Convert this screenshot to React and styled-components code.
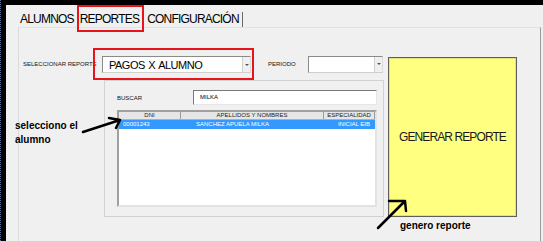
import React from "react";
import styled, { createGlobalStyle } from "styled-components";

const GlobalStyle = createGlobalStyle`
  html, body {
    margin: 0;
    padding: 0;
    background: #000;
  }
  body {
    font-family: "Liberation Sans", Arial, sans-serif;
  }
`;

const Screen = styled.div`
  position: relative;
  width: 543px;
  height: 241px;
  box-sizing: border-box;
  padding: 5px 0 0 5px;
  background: #000;
  border-left: 1px dotted #5a6e9a;
  overflow: hidden;
`;

const Window = styled.div`
  height: 236px;
  background: #f0f0f0;
  display: flex;
  flex-direction: column;
`;

const TabStrip = styled.div`
  height: 22px;
  flex: none;
  display: flex;
  align-items: flex-start;
  gap: 1px;
  padding-left: 12px;
`;

const Tab = styled.div`
  position: relative;
  z-index: 1;
  box-sizing: border-box;
  height: ${(p) => (p.$marked ? "27px" : "22px")};
  padding: ${(p) => (p.$marked ? "5px 3px 0 1px" : "7px 2px 0 2px")};
  border: ${(p) => (p.$marked ? "2px solid #e8141c" : "none")};
  font-size: 12px;
  line-height: 15px;
  letter-spacing: -0.8px;
  color: #000;
  white-space: nowrap;
`;

const TabDivider = styled.div`
  align-self: flex-end;
  width: 1px;
  height: 15px;
  background: #6a6a6a;
`;

const TabPage = styled.div`
  flex: 1;
  margin: 0 2px 0 12px;
  border-top: 1px solid #e2e2e2;
  border-left: 1px solid #dadada;
  border-right: 1px solid #9a9a9a;
  display: flex;
  padding-top: 20px;
`;

const LeftCol = styled.div`
  width: 365px;
  display: flex;
  flex-direction: column;
`;

const TopRow = styled.div`
  height: 32px;
  display: flex;
  align-items: center;
`;

const Label = styled.div`
  box-sizing: border-box;
  width: ${(p) => p.$w}px;
  margin-left: ${(p) => p.$ml || 0}px;
  padding-left: ${(p) => p.$pl || 0}px;
  font-size: 6px;
  color: #111;
  white-space: nowrap;
`;

const MarkBox = styled.div`
  box-sizing: border-box;
  width: 161px;
  height: 32px;
  border: 2px solid #e8141c;
  padding: 6px 0 0 7px;
`;

const Combo = styled.div`
  box-sizing: border-box;
  width: ${(p) => p.$w}px;
  height: 17px;
  background: #fff;
  border: 1px solid;
  border-color: #8a8a8a #dcdcdc #cfcfcf #8a8a8a;
  display: flex;
  align-items: center;
`;

const ComboText = styled.div`
  flex: 1;
  padding-left: 6px;
  font-size: 11px;
  letter-spacing: -0.5px;
  word-spacing: 1px;
  color: #000;
  white-space: nowrap;
`;

const ComboArrow = styled.div`
  align-self: stretch;
  width: 7px;
  background: #f0f0f0;
  border-left: 1px solid #d0d0d0;
  display: flex;
  align-items: center;
  justify-content: center;
  &::after {
    content: "";
    border-left: 2px solid transparent;
    border-right: 2px solid transparent;
    border-top: 2px solid #555;
  }
`;

const Panel = styled.div`
  box-sizing: border-box;
  width: 280px;
  height: 137px;
  margin-left: 85px;
  border: 1px solid #d2d2d2;
  padding: 9px 0 0 12px;
`;

const SearchRow = styled.div`
  height: 15px;
  display: flex;
  align-items: center;
`;

const TextBox = styled.div`
  box-sizing: border-box;
  width: 184px;
  height: 15px;
  background: #fff;
  border: 1px solid;
  border-color: #7a7a7a #e6e6e6 #e6e6e6 #7a7a7a;
  padding-left: 6px;
  font-size: 6px;
  line-height: 13px;
  color: #000;
`;

const Grid = styled.div`
  box-sizing: border-box;
  width: 260px;
  height: 97px;
  margin-top: 5px;
  background: #fff;
  border: 2px solid;
  border-color: #a0a0a0 #e3e3e3 #e3e3e3 #a0a0a0;
`;

const GridRow = styled.div`
  display: flex;
  height: ${(p) => (p.$head ? 7 : 9)}px;
  background: ${(p) => (p.$head ? "#e6e6e6" : "#3399ff")};
  color: ${(p) => (p.$head ? "#222" : "#fff")};
  border-bottom: ${(p) => (p.$head ? "1px solid #b0b0b0" : "none")};
`;

const Cell = styled.div`
  box-sizing: border-box;
  width: ${(p) => p.$w}px;
  padding-left: ${(p) => p.$pl || 0}px;
  text-align: ${(p) => p.$align || "center"};
  font-size: 6px;
  line-height: ${(p) => (p.$head ? 7 : 9)}px;
  white-space: nowrap;
  border-right: ${(p) => (p.$head ? "1px solid #9a9a9a" : "none")};
`;

const ReportButton = styled.button`
  box-sizing: border-box;
  width: 129px;
  height: 160px;
  margin: 9px 0 0 4px;
  padding: 0;
  background: #ffff80;
  border: 1px solid #5e5e5e;
  box-shadow: inset 0 0 0 1px #e2e27a;
  font-family: "Liberation Sans", Arial, sans-serif;
  font-size: 12px;
  letter-spacing: -0.9px;
  color: #1a1a1a;
`;

const Note = styled.div`
  position: absolute;
  left: ${(p) => p.$x}px;
  top: ${(p) => p.$y}px;
  font-size: 10px;
  font-weight: bold;
  line-height: 14px;
  color: #000;
  white-space: nowrap;
`;

const Arrows = styled.svg`
  position: absolute;
  left: 0;
  top: 0;
  pointer-events: none;
`;

export default function App() {
  return (
    <>
      <GlobalStyle />
      <Screen>
        <Window>
          <TabStrip>
            <Tab>ALUMNOS</Tab>
            <Tab $marked>REPORTES</Tab>
            <Tab>CONFIGURACIÓN</Tab>
            <TabDivider />
          </TabStrip>
          <TabPage>
            <LeftCol>
              <TopRow>
                <Label $w={74} $pl={4}>SELECCIONAR REPORTE</Label>
                <MarkBox>
                  <Combo $w={149}>
                    <ComboText>PAGOS X ALUMNO</ComboText>
                    <ComboArrow />
                  </Combo>
                </MarkBox>
                <Label $w={40} $ml={14}>PERIODO</Label>
                <Combo $w={75}>
                  <ComboText />
                  <ComboArrow />
                </Combo>
              </TopRow>
              <Panel>
                <SearchRow>
                  <Label $w={76}>BUSCAR</Label>
                  <TextBox>MILKA</TextBox>
                </SearchRow>
                <Grid>
                  <GridRow $head>
                    <Cell $head $w={62}>DNI</Cell>
                    <Cell $head $w={143}>APELLIDOS Y NOMBRES</Cell>
                    <Cell $head $w={51}>ESPECIALIDAD</Cell>
                  </GridRow>
                  <GridRow>
                    <Cell $w={62} $align="left" $pl={4}>00001243</Cell>
                    <Cell $w={143} $align="left" $pl={15}>SANCHEZ APUELA MILKA</Cell>
                    <Cell $w={51} $align="right" $pl={0}>INICIAL EIB&nbsp;&nbsp;&nbsp;</Cell>
                  </GridRow>
                </Grid>
              </Panel>
            </LeftCol>
            <ReportButton>GENERAR REPORTE</ReportButton>
          </TabPage>
        </Window>

        <Note $x={14} $y={119}>
          selecciono el
          <br />
          alumno
        </Note>
        <Note $x={399} $y={219}>genero reporte</Note>

        <Arrows width="543" height="241" viewBox="0 0 543 241">
          <g stroke="#000" strokeWidth="2.5" strokeLinecap="round" fill="none">
            <path d="M82 132 L119 120 M119 120 L108 118 M119 120 L115 128" />
            <path d="M377 228 L404 201 M404 201 L388 201 M404 201 L405 211" />
          </g>
        </Arrows>
      </Screen>
    </>
  );
}
